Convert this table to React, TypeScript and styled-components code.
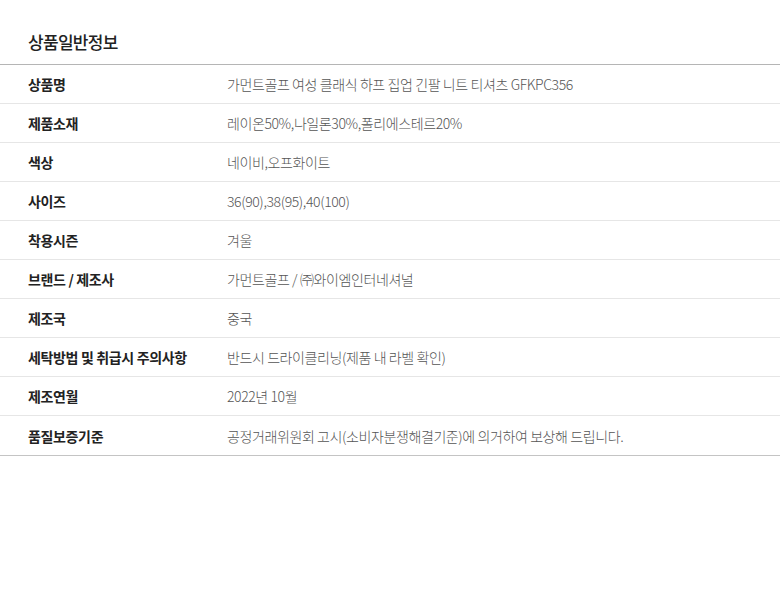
import React from "react";
import styled, { createGlobalStyle } from "styled-components";

const Global = createGlobalStyle`
  html, body { margin: 0; padding: 0; background: #fff; }
  body { font-family: "Noto Sans CJK KR", "Noto Sans", sans-serif; }
`;

const Wrap = styled.section`
  width: 780px;
  padding-top: 28px;
`;

const Title = styled.h2`
  margin: 0;
  padding: 0 28px;
  height: 36px;
  font-size: 17px;
  font-weight: 500;
  color: #222;
  line-height: 28px;
  letter-spacing: -0.7px;
`;

const Table = styled.div`
  border-top: 1px solid #b5b5b5;
  border-bottom: 1px solid #c4c4c4;
`;

const Row = styled.div<{ $last?: boolean }>`
  display: grid;
  grid-template-columns: 199px 1fr;
  height: ${(p) => (p.$last ? "39px" : "38px")};
  align-items: center;
  padding-left: 28px;
  border-bottom: ${(p) => (p.$last ? "none" : "1px solid #e6e6e6")};
  font-size: 14px;
`;

const Label = styled.div`
  font-weight: 700;
  color: #222;
  letter-spacing: -0.35px;
`;

const Value = styled.div`
  font-weight: 300;
  color: #555;
  letter-spacing: -0.4px;
`;

const rows: [string, string][] = [
  ["상품명", "가먼트골프 여성 클래식 하프 집업 긴팔 니트 티셔츠 GFKPC356"],
  ["제품소재", "레이온50%,나일론30%,폴리에스테르20%"],
  ["색상", "네이비,오프화이트"],
  ["사이즈", "36(90),38(95),40(100)"],
  ["착용시즌", "겨울"],
  ["브랜드 / 제조사", "가먼트골프 / ㈜와이엠인터네셔널"],
  ["제조국", "중국"],
  ["세탁방법 및 취급시 주의사항", "반드시 드라이클리닝(제품 내 라벨 확인)"],
  ["제조연월", "2022년 10월"],
  ["품질보증기준", "공정거래위원회 고시(소비자분쟁해결기준)에 의거하여 보상해 드립니다."],
];

export default function App() {
  return (
    <>
      <Global />
      <Wrap>
        <Title>상품일반정보</Title>
        <Table>
          {rows.map(([k, v], i) => (
            <Row key={k} $last={i === rows.length - 1}>
              <Label>{k}</Label>
              <Value>{v}</Value>
            </Row>
          ))}
        </Table>
      </Wrap>
    </>
  );
}
